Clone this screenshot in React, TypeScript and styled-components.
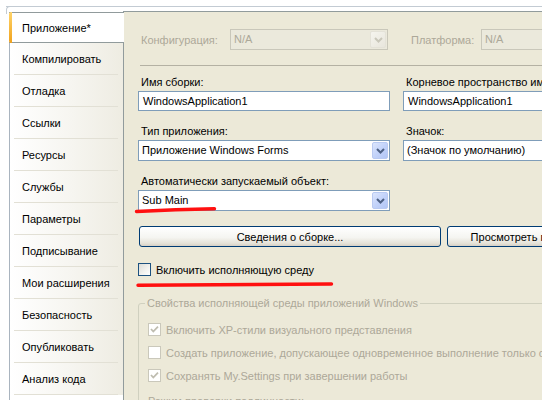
import React from 'react';
import styled, { createGlobalStyle } from 'styled-components';

const Global = createGlobalStyle`
  html, body { margin: 0; padding: 0; background: #ffffff; }
  body { font-family: "Liberation Sans", Arial, sans-serif; font-size: 11px; color: #000; }
  * { box-sizing: border-box; }
`;

const Root = styled.div`
  position: relative;
  width: 542px;
  height: 400px;
  overflow: hidden;
  background: #ffffff;
  padding: 6px 0 0 6px;
  display: flex;
`;

const Frame = styled.div`
  position: relative;
  flex: 1;
  display: flex;
  min-width: 0;
  border-top: 1px solid #c3cbd3;
  &::before {
    content: '';
    position: absolute;
    left: 0;
    top: -1px;
    width: 6px;
    height: 7px;
    border-left: 1px solid #c3cbd3;
    border-top: 1px solid #c3cbd3;
    border-top-left-radius: 4px;
  }
`;

const TabColumn = styled.div`
  width: 117px;
  flex: none;
  padding: 5px 0 0 3px;
`;

const TabList = styled.div`
  border-left: 1px solid #a9b4bf;
  height: 100%;
`;

const Tab = styled.div<{ $active?: boolean }>`
  position: relative;
  display: flex;
  align-items: center;
  white-space: nowrap;
  ${(p) =>
    p.$active
      ? `
    z-index: 2;
    height: 31px;
    margin: 0 -1px 0 -1px;
    padding-left: 13px;
    background: #ffffff;
    border-top: 1px solid #919b9c;
    border-bottom: 1px solid #919b9c;
    &::before {
      content: '';
      position: absolute;
      left: 0; top: -1px; bottom: -1px; width: 3px;
      border-radius: 2px 0 0 2px;
      background: linear-gradient(#ffd46a, #f0a21c);
    }
  `
      : `
    height: 32px;
    padding-left: 12px;
    background: linear-gradient(to right, #ffffff 0%, #f6f5f0 55%, #eeece2 100%);
    &::after {
      content: '';
      position: absolute;
      left: 4px; right: 5px; bottom: 0; height: 1px;
      background: #e2e0d5;
    }
  `}
`;

const ContentPanel = styled.div`
  position: relative;
  flex: 1;
  min-width: 0;
  margin-top: 4px;
  border-top: 1px solid #919b9c;
  border-left: 1px solid #919b9c;
  background: #ece9d8;
  padding: 17px 0 0 15px;
  overflow: hidden;
  white-space: nowrap;
`;

const ConfigRow = styled.div`
  display: flex;
  align-items: center;
  height: 21px;
`;

const DimLabel = styled.span<{ $w: number; $ml?: number }>`
  flex: none;
  width: ${(p) => p.$w}px;
  margin-left: ${(p) => p.$ml ?? 0}px;
  padding-left: 2px;
  color: #aca899;
`;

const ComboBox = styled.div<{ $disabled?: boolean; $w?: number }>`
  flex: none;
  width: ${(p) => (p.$w ? `${p.$w}px` : '100%')};
  height: 21px;
  display: flex;
  padding: 1px;
  border: 1px solid ${(p) => (p.$disabled ? '#c9c7ba' : '#7f9db9')};
  background: ${(p) => (p.$disabled ? '#ebe9dc' : '#ffffff')};
  color: ${(p) => (p.$disabled ? '#aca899' : '#000')};
`;

const ComboText = styled.span`
  flex: 1;
  min-width: 0;
  overflow: hidden;
  padding-left: 2px;
  line-height: 17px;
`;

const ComboButton = styled.span<{ $disabled?: boolean }>`
  flex: none;
  width: 16px;
  display: flex;
  align-items: center;
  justify-content: center;
  border-radius: 2px;
  border: 1px solid ${(p) => (p.$disabled ? '#e4e2d8' : '#b9caf2')};
  background: ${(p) =>
    p.$disabled
      ? 'linear-gradient(135deg, #f5f4ee, #e8e6dc)'
      : 'linear-gradient(135deg, #dce6fd 0%, #c3d3fa 50%, #b2c6f5 100%)'};
`;

const Divider = styled.div`
  margin: 15px 0 0 1px;
  height: 1px;
  background: #b4b1a3;
`;

const FieldGrid = styled.div`
  margin: 10px 0 0 -1px;
  display: grid;
  grid-template-columns: 252px 252px;
  column-gap: 13px;
  row-gap: 14px;
`;

const Field = styled.div`
  display: flex;
  flex-direction: column;
  min-width: 0;
`;

const FieldLabel = styled.div`
  height: 13px;
  line-height: 13px;
  padding-left: 3px;
  margin-bottom: 2px;
  overflow: hidden;
`;

const TextBox = styled.div`
  height: 20px;
  line-height: 18px;
  border: 1px solid #7f9db9;
  background: #ffffff;
  padding-left: 4px;
  overflow: hidden;
`;

const ButtonRow = styled.div`
  margin-top: 15px;
  display: flex;
  gap: 6px;
`;

const XPButton = styled.div<{ $w: number }>`
  flex: none;
  width: ${(p) => p.$w}px;
  height: 21px;
  border: 1px solid #003c74;
  border-radius: 3px;
  display: flex;
  align-items: center;
  justify-content: center;
  background: linear-gradient(180deg, #ffffff 0%, #f5f5f1 55%, #e6e3d9 85%, #d6d0c5 100%);
  overflow: hidden;
`;

const CheckRow = styled.div<{ $dim?: boolean }>`
  display: flex;
  align-items: center;
  gap: 5px;
  height: 13px;
  color: ${(p) => (p.$dim ? '#aca899' : '#000')};
`;

const MainCheckRow = styled(CheckRow)`
  margin: 16px 0 0 -1px;
`;

const Box = styled.span<{ $dim?: boolean }>`
  flex: none;
  width: 13px;
  height: 13px;
  display: flex;
  align-items: center;
  justify-content: center;
  border: 1px solid ${(p) => (p.$dim ? '#cac8bb' : '#1c5180')};
  background: ${(p) =>
    p.$dim ? '#ffffff' : 'linear-gradient(135deg, #dcdcd7 0%, #f3f3f0 60%, #ffffff 100%)'};
`;

const Group = styled.fieldset`
  margin: 21px 0 0 -1px;
  padding: 0;
  border: 1px solid #d0d0bf;
  border-radius: 3px;
  width: 520px;
  min-width: 0;
`;

const Legend = styled.legend`
  margin-left: 6px;
  padding: 0 2px;
  line-height: 13px;
  color: #aca899;
`;

const GroupBody = styled.div`
  padding: 13px 0 0 9px;
  display: flex;
  flex-direction: column;
  gap: 10px;
`;

const GroupLabel = styled.div`
  margin-top: 3px;
  color: #aca899;
  line-height: 13px;
`;

const Marks = styled.svg`
  position: absolute;
  left: 0;
  top: 0;
  pointer-events: none;
  z-index: 5;
`;

const Chevron = ({ dim }: { dim?: boolean }) => (
  <svg width="9" height="6" viewBox="0 0 9 6">
    <path d="M1 1 L4.5 4.5 L8 1" fill="none" stroke={dim ? '#c9c7ba' : '#4d6185'} strokeWidth="2" />
  </svg>
);

const Check = () => (
  <svg width="9" height="9" viewBox="0 0 9 9">
    <path d="M1 4 L3.3 6.5 L8 1.6" fill="none" stroke="#bfbdb0" strokeWidth="1.8" />
  </svg>
);

const Combo = ({ text, disabled, w }: { text: string; disabled?: boolean; w?: number }) => (
  <ComboBox $disabled={disabled} $w={w}>
    <ComboText>{text}</ComboText>
    <ComboButton $disabled={disabled}>
      <Chevron dim={disabled} />
    </ComboButton>
  </ComboBox>
);

const tabs = [
  'Приложение*',
  'Компилировать',
  'Отладка',
  'Ссылки',
  'Ресурсы',
  'Службы',
  'Параметры',
  'Подписывание',
  'Мои расширения',
  'Безопасность',
  'Опубликовать',
  'Анализ кода',
];

export default function App() {
  return (
    <>
      <Global />
      <Root>
        <Frame>
          <TabColumn>
            <TabList>
              {tabs.map((t, i) => (
                <Tab key={t} $active={i === 0}>
                  {t}
                </Tab>
              ))}
            </TabList>
          </TabColumn>
          <ContentPanel>
            <ConfigRow>
              <DimLabel $w={91}>Конфигурация:</DimLabel>
              <Combo text="N/A" disabled w={158} />
              <DimLabel $w={72} $ml={21}>Платформа:</DimLabel>
              <Combo text="N/A" disabled w={158} />
            </ConfigRow>
            <Divider />
            <FieldGrid>
              <Field>
                <FieldLabel>Имя сборки:</FieldLabel>
                <TextBox>WindowsApplication1</TextBox>
              </Field>
              <Field>
                <FieldLabel>Корневое пространство имен:</FieldLabel>
                <TextBox>WindowsApplication1</TextBox>
              </Field>
              <Field>
                <FieldLabel>Тип приложения:</FieldLabel>
                <Combo text="Приложение Windows Forms" />
              </Field>
              <Field>
                <FieldLabel>Значок:</FieldLabel>
                <Combo text="(Значок по умолчанию)" />
              </Field>
              <Field>
                <FieldLabel>Автоматически запускаемый объект:</FieldLabel>
                <Combo text="Sub Main" />
              </Field>
            </FieldGrid>
            <ButtonRow>
              <XPButton $w={302}>Сведения о сборке...</XPButton>
              <XPButton $w={200}>Просмотреть параметры UAC</XPButton>
            </ButtonRow>
            <MainCheckRow>
              <Box />
              <span>Включить исполняющую среду</span>
            </MainCheckRow>
            <Group>
              <Legend>Свойства исполняющей среды приложений Windows</Legend>
              <GroupBody>
                <CheckRow $dim>
                  <Box $dim>
                    <Check />
                  </Box>
                  <span>Включить XP-стили визуального представления</span>
                </CheckRow>
                <CheckRow $dim>
                  <Box $dim />
                  <span>Создать приложение, допускающее одновременное выполнение только одного экземпляра</span>
                </CheckRow>
                <CheckRow $dim>
                  <Box $dim>
                    <Check />
                  </Box>
                  <span>Сохранять My.Settings при завершении работы</span>
                </CheckRow>
                <GroupLabel>Режим проверки подлинности:</GroupLabel>
              </GroupBody>
            </Group>
          </ContentPanel>
        </Frame>
        <Marks width="542" height="400" viewBox="0 0 542 400">
          <path d="M136.5 211.5 Q 176 209.5 214.5 208.8" fill="none" stroke="#ff1010" strokeWidth="3.4" strokeLinecap="round" />
          <path d="M138 285.2 Q 236 284.6 331.5 284" fill="none" stroke="#ff1010" strokeWidth="3.4" strokeLinecap="round" />
        </Marks>
      </Root>
    </>
  );
}
